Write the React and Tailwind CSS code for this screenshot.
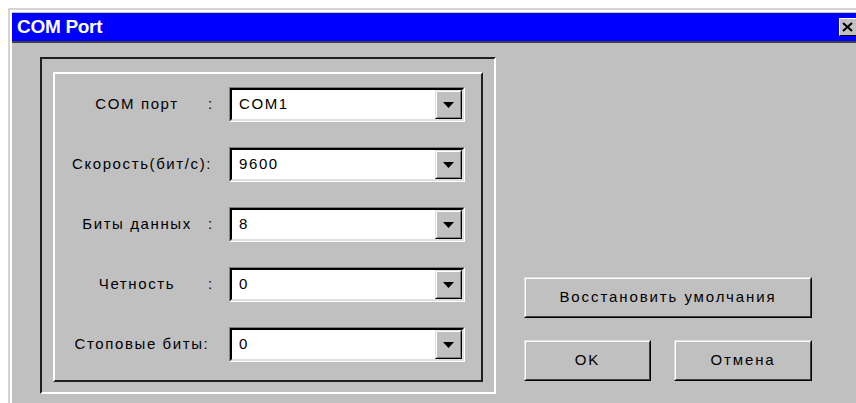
import React from 'react'

// Classic Win9x style "COM Port" settings dialog

const font = { fontFamily: '"Liberation Sans", Arial, sans-serif' }

function Combo({ value }) {
  return (
    <div className="w-[236px] h-[35px] border border-t-[#808080] border-l-[#808080] border-b-white border-r-white">
      <div className="h-full flex border-2 border-t-black border-l-black border-b-[#dfdfdf] border-r-[#dfdfdf] bg-white">
        <div className="flex-1 flex items-center pl-[7px] text-[15px] tracking-[1.6px] text-black">{value}</div>
        <div className="w-[27px] h-full border border-t-[#dfdfdf] border-l-[#dfdfdf] border-b-black border-r-black bg-[#c0c0c0]">
          <div className="h-full flex items-center justify-center border border-t-white border-l-white border-b-[#808080] border-r-[#808080]">
            <svg width="11" height="6" viewBox="0 0 11 6">
              <path d="M0 0h11L5.5 6z" fill="#000" />
            </svg>
          </div>
        </div>
      </div>
    </div>
  )
}

function Row({ label, colon, value }) {
  return (
    <div className="flex items-center h-[35px]">
      <div className="w-[152px] flex items-center text-[15px] tracking-[1.6px] text-black">
        {colon ? (
          <>
            <span className="w-[142px] text-center whitespace-nowrap">{label}</span>
            <span>:</span>
          </>
        ) : (
          <span className="w-full text-center whitespace-nowrap">{label}</span>
        )}
      </div>
      <div className="ml-[11px]">
        <Combo value={value} />
      </div>
    </div>
  )
}

function Button({ children, className }) {
  return (
    <button className={`h-[41px] bg-[#c0c0c0] border border-t-[#dfdfdf] border-l-[#dfdfdf] border-b-black border-r-black ${className}`}>
      <div className="h-full flex items-center justify-center border border-t-white border-l-white border-b-[#404040] border-r-[#404040] text-[15px] tracking-[1.9px] text-black">
        {children}
      </div>
    </button>
  )
}

const rows = [
  { label: 'COM порт', colon: true, value: 'COM1' },
  { label: 'Скорость(бит/с):', colon: false, value: '9600' },
  { label: 'Биты данных', colon: true, value: '8' },
  { label: 'Четность', colon: true, value: '0' },
  { label: 'Стоповые биты:', colon: false, value: '0' },
]

export default function App() {
  return (
    <div className="w-[856px] h-[403px] bg-white overflow-hidden" style={font}>
      <div className="ml-[8px] mt-[8px] h-[395px] border-t-2 border-l-2 border-[#d4d4d4]">
        <div className="h-full border-t-2 border-l-2 border-white bg-[#c0c0c0] flex flex-col">
          {/* title bar */}
          <div className="h-[30px] flex items-center justify-between bg-[#0000ff] border-b-2 border-[#404040] mt-[1px]">
            <span className="pl-[5px] text-[19px] font-bold text-white tracking-[-0.3px]">COM Port</span>
            <div className="w-[17px] h-[18px] bg-[#c0c0c0] border border-t-white border-l-white border-b-black border-r-0 flex items-center justify-center">
              <svg width="12" height="11" viewBox="0 0 12 11">
                <path d="M1 1l9 8M10 1l-9 8" stroke="#000" strokeWidth="2" />
              </svg>
            </div>
          </div>

          <div className="flex-1 flex pt-[14px] pl-[28px]">
            {/* settings group frame */}
            <div className="w-[456px] h-[337px] border-2 border-t-[#202020] border-l-[#202020] border-b-white border-r-white pt-[13px] pl-[11px]">
              <div className="w-[430px] h-[310px] border-2 border-t-white border-l-white border-b-[#202020] border-r-[#202020] pt-[13px] pl-[11px] flex flex-col gap-[25px]">
                {rows.map((r, i) => (
                  <Row key={i} {...r} />
                ))}
              </div>
            </div>

            {/* buttons */}
            <div className="ml-[28px] pt-[220px] flex flex-col gap-[22px]">
              <Button className="w-[288px]">Восстановить умолчания</Button>
              <div className="flex gap-[23px]">
                <Button className="w-[127px]">OK</Button>
                <Button className="w-[138px]">Отмена</Button>
              </div>
            </div>
          </div>
        </div>
      </div>
    </div>
  )
}
